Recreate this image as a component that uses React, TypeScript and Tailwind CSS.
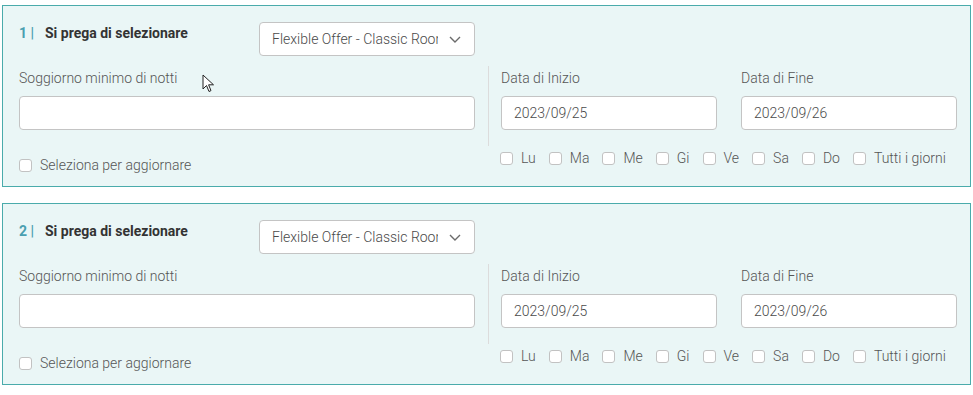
import React from 'react';

const days = ['Lu', 'Ma', 'Me', 'Gi', 'Ve', 'Sa', 'Do', 'Tutti i giorni'];

const Box: React.FC = () => (
  <span className="w-[13px] h-[13px] shrink-0 rounded-[3px] border border-[#c2c2c2] bg-white" />
);

const Field: React.FC<{ label: string; value?: string; className?: string }> = ({ label, value, className }) => (
  <div className={className}>
    <div className="mt-[2px] leading-[20px] text-[#555]">{label}</div>
    <div className="mt-[8px] h-[34px] rounded-[4px] border border-[#c4c4c4] bg-white pl-[12px] leading-[32px] text-[#4a4a4a]">
      {value}
    </div>
  </div>
);

const RuleCard: React.FC<{ index: number }> = ({ index }) => (
  <div className="flex border border-[#4aabab] bg-[#eaf6f6] pl-[16px] pr-[15px] pt-[16px] pb-[11px]">
    {/* colonna sinistra */}
    <div className="w-[456px] shrink-0">
      <div className="flex h-[34px] items-start justify-between">
        <div className="flex pt-[1px] text-[14px] leading-[20px]">
          <span className="w-[26px] font-bold text-[#4a9fb0]">{index} |</span>
          <span className="font-bold text-[#333]">Si prega di selezionare</span>
        </div>
        <div className="flex h-[34px] w-[216px] items-center rounded-[4px] border border-[#c4c4c4] bg-white pl-[12px] pr-[13px]">
          <span className="w-[166px] overflow-hidden whitespace-nowrap text-[#4a4a4a]">Flexible Offer - Classic Room</span>
          <svg width="12" height="7" viewBox="0 0 12 7" className="ml-auto">
            <polyline points="1,1 6,6 11,1" fill="none" stroke="#6b6b6b" strokeWidth="1.4" />
          </svg>
        </div>
      </div>
      <div className="mt-[12px] leading-[20px] text-[#555]">Soggiorno minimo di notti</div>
      <div className="mt-[8px] h-[34px] rounded-[4px] border border-[#c4c4c4] bg-white" />
      <div className="mt-[25px] flex items-center gap-[8px] leading-[20px] text-[#555]">
        <Box />
        <span>Seleziona per aggiornare</span>
      </div>
    </div>

    {/* colonna destra */}
    <div className="ml-[13px] flex-1 pt-[44px]">
      <div className="flex h-[80px] gap-[24px] border-l border-[#dcdcdc] pl-[12px]">
        <Field label="Data di Inizio" value="2023/09/25" className="w-[216px]" />
        <Field label="Data di Fine" value="2023/09/26" className="w-[216px]" />
      </div>
      <div className="mt-[2px] flex gap-[13px] pl-[12px] leading-[20px] text-[#555]">
        {days.map((d) => (
          <label key={d} className="flex items-center gap-[8px]">
            <Box />
            <span>{d}</span>
          </label>
        ))}
      </div>
    </div>
  </div>
);

export default function App() {
  return (
    <div className="relative min-h-[395px] bg-white px-[2px] pt-[5px] font-['Roboto',sans-serif] text-[14px] font-light">
      <div className="flex flex-col gap-[16px]">
        <RuleCard index={1} />
        <RuleCard index={2} />
      </div>
      {/* puntatore del mouse */}
      <svg width="14" height="20" viewBox="0 0 14 20" className="absolute left-[202px] top-[74px]">
        <path d="M1 1 L1 15 L4.5 11.5 L7 17.5 L9 16.6 L6.6 10.8 L11.5 10.8 Z" fill="#fff" stroke="#222" strokeWidth="1" strokeLinejoin="round" />
      </svg>
    </div>
  );
}
